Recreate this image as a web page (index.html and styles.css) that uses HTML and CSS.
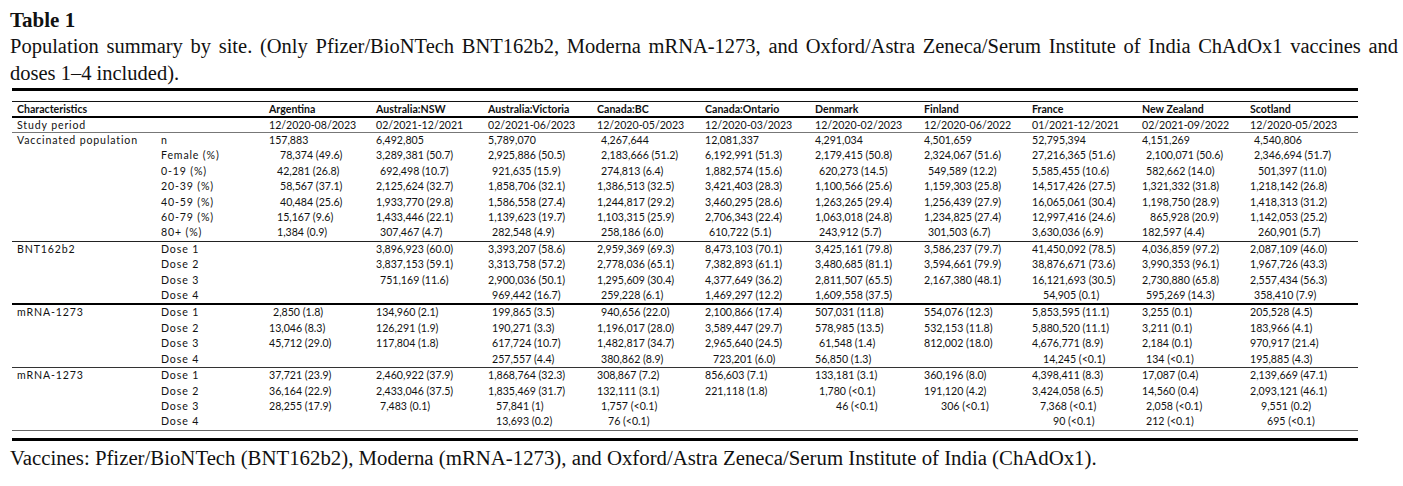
FILE: index.html
```html
<!DOCTYPE html>
<html lang="en">
<head>
<meta charset="utf-8">
<title>Table 1</title>
<link rel="stylesheet" href="styles.css">
</head>
<body>
<div class="title">Table 1</div>
<div class="caption"><span class="l1">Population summary by site. (Only Pfizer/BioNTech BNT162b2, Moderna mRNA-1273, and Oxford/Astra Zeneca/Serum Institute of India ChAdOx1 vaccines and</span><span class="l2">doses 1–4 included).</span></div>
<div class="figure">
<table class="data">
<colgroup>
<col class="c1"><col class="c2"><col class="c3"><col class="c4"><col class="c5"><col class="c6"><col class="c7"><col class="c8"><col class="c9"><col class="c10"><col class="c11"><col class="c12">
</colgroup>
<thead>
<tr class="head"><th>Characteristics</th><th></th><th>Argentina</th><th>Australia:NSW</th><th>Australia:Victoria</th><th>Canada:BC</th><th>Canada:Ontario</th><th>Denmark</th><th>Finland</th><th>France</th><th>New Zealand</th><th>Scotland</th></tr>
</thead>
<tbody class="period">
<tr><td class="lab">Study period</td><td></td><td>12/2020-08/2023</td><td>02/2021-12/2021</td><td>02/2021-06/2023</td><td>12/2020-05/2023</td><td>12/2020-03/2023</td><td>12/2020-02/2023</td><td>12/2020-06/2022</td><td>01/2021-12/2021</td><td>02/2021-09/2022</td><td>12/2020-05/2023</td></tr>
</tbody>
<tbody class="grp g-thin">
<tr><td class="lab">Vaccinated population</td><td class="lab">n</td><td>157,883</td><td>6,492,805</td><td>5,789,070</td><td class="s1">4,267,644</td><td>12,081,337</td><td>4,291,034</td><td>4,501,659</td><td>52,795,394</td><td>4,151,269</td><td class="s1">4,540,806</td></tr>
<tr><td></td><td class="lab">Female (%)</td><td class="s3">78,374 (49.6)</td><td>3,289,381 (50.7)</td><td>2,925,886 (50.5)</td><td class="s1">2,183,666 (51.2)</td><td>6,192,991 (51.3)</td><td>2,179,415 (50.8)</td><td>2,324,067 (51.6)</td><td>27,216,365 (51.6)</td><td class="s1">2,100,071 (50.6)</td><td class="s1">2,346,694 (51.7)</td></tr>
<tr><td></td><td class="lab">0-19 (%)</td><td class="s2">42,281 (26.8)</td><td class="s1">692,498 (10.7)</td><td class="s1">921,635 (15.9)</td><td class="s1">274,813 (6.4)</td><td>1,882,574 (15.6)</td><td class="s1">620,273 (14.5)</td><td class="s1">549,589 (12.2)</td><td>5,585,455 (10.6)</td><td class="s1">582,662 (14.0)</td><td class="s2">501,397 (11.0)</td></tr>
<tr><td></td><td class="lab">20-39 (%)</td><td class="s3">58,567 (37.1)</td><td>2,125,624 (32.7)</td><td>1,858,706 (32.1)</td><td>1,386,513 (32.5)</td><td>3,421,403 (28.3)</td><td>1,100,566 (25.6)</td><td>1,159,303 (25.8)</td><td>14,517,426 (27.5)</td><td>1,321,332 (31.8)</td><td>1,218,142 (26.8)</td></tr>
<tr><td></td><td class="lab">40-59 (%)</td><td class="s3">40,484 (25.6)</td><td>1,933,770 (29.8)</td><td>1,586,558 (27.4)</td><td>1,244,817 (29.2)</td><td>3,460,295 (28.6)</td><td>1,263,265 (29.4)</td><td>1,256,439 (27.9)</td><td>16,065,061 (30.4)</td><td>1,198,750 (28.9)</td><td>1,418,313 (31.2)</td></tr>
<tr><td></td><td class="lab">60-79 (%)</td><td class="s2">15,167 (9.6)</td><td>1,433,446 (22.1)</td><td>1,139,623 (19.7)</td><td>1,103,315 (25.9)</td><td>2,706,343 (22.4)</td><td>1,063,018 (24.8)</td><td>1,234,825 (27.4)</td><td>12,997,416 (24.6)</td><td class="s2">865,928 (20.9)</td><td>1,142,053 (25.2)</td></tr>
<tr class="last"><td></td><td class="lab">80+ (%)</td><td class="s2">1,384 (0.9)</td><td class="s1">307,467 (4.7)</td><td class="s1">282,548 (4.9)</td><td class="s1">258,186 (6.0)</td><td class="s1">610,722 (5.1)</td><td class="s1">243,912 (5.7)</td><td class="s1">301,503 (6.7)</td><td>3,630,036 (6.9)</td><td>182,597 (4.4)</td><td class="s2">260,901 (5.7)</td></tr>
</tbody>
<tbody class="grp g-thick">
<tr><td class="lab">BNT162b2</td><td class="lab">Dose 1</td><td></td><td>3,896,923 (60.0)</td><td>3,393,207 (58.6)</td><td>2,959,369 (69.3)</td><td>8,473,103 (70.1)</td><td>3,425,161 (79.8)</td><td>3,586,237 (79.7)</td><td>41,450,092 (78.5)</td><td>4,036,859 (97.2)</td><td>2,087,109 (46.0)</td></tr>
<tr><td></td><td class="lab">Dose 2</td><td></td><td>3,837,153 (59.1)</td><td>3,313,758 (57.2)</td><td>2,778,036 (65.1)</td><td>7,382,893 (61.1)</td><td>3,480,685 (81.1)</td><td>3,594,661 (79.9)</td><td>38,876,671 (73.6)</td><td>3,990,353 (96.1)</td><td>1,967,726 (43.3)</td></tr>
<tr><td></td><td class="lab">Dose 3</td><td></td><td class="s1">751,169 (11.6)</td><td>2,900,036 (50.1)</td><td>1,295,609 (30.4)</td><td>4,377,649 (36.2)</td><td>2,811,507 (65.5)</td><td>2,167,380 (48.1)</td><td>16,121,693 (30.5)</td><td>2,730,880 (65.8)</td><td>2,557,434 (56.3)</td></tr>
<tr class="last"><td></td><td class="lab">Dose 4</td><td></td><td></td><td class="s1">969,442 (16.7)</td><td class="s1">259,228 (6.1)</td><td>1,469,297 (12.2)</td><td>1,609,558 (37.5)</td><td></td><td class="s3">54,905 (0.1)</td><td class="s1">595,269 (14.3)</td><td class="s1">358,410 (7.9)</td></tr>
</tbody>
<tbody class="grp g-mid">
<tr><td class="lab">mRNA-1273</td><td class="lab">Dose 1</td><td class="s1">2,850 (1.8)</td><td>134,960 (2.1)</td><td class="s1">199,865 (3.5)</td><td class="s1">940,656 (22.0)</td><td>2,100,866 (17.4)</td><td>507,031 (11.8)</td><td>554,076 (12.3)</td><td>5,853,595 (11.1)</td><td>3,255 (0.1)</td><td>205,528 (4.5)</td></tr>
<tr><td></td><td class="lab">Dose 2</td><td>13,046 (8.3)</td><td>126,291 (1.9)</td><td class="s1">190,271 (3.3)</td><td>1,196,017 (28.0)</td><td>3,589,447 (29.7)</td><td>578,985 (13.5)</td><td>532,153 (11.8)</td><td>5,880,520 (11.1)</td><td>3,211 (0.1)</td><td>183,966 (4.1)</td></tr>
<tr><td></td><td class="lab">Dose 3</td><td>45,712 (29.0)</td><td>117,804 (1.8)</td><td class="s1">617,724 (10.7)</td><td>1,482,817 (34.7)</td><td>2,965,640 (24.5)</td><td class="s1">61,548 (1.4)</td><td>812,002 (18.0)</td><td>4,676,771 (8.9)</td><td>2,184 (0.1)</td><td>970,917 (21.4)</td></tr>
<tr class="last"><td></td><td class="lab">Dose 4</td><td></td><td></td><td class="s1">257,557 (4.4)</td><td class="s1">380,862 (8.9)</td><td class="s2">723,201 (6.0)</td><td>56,850 (1.3)</td><td></td><td class="s3">14,245 (&lt;0.1)</td><td class="s1">134 (&lt;0.1)</td><td>195,885 (4.3)</td></tr>
</tbody>
<tbody class="grp g-light">
<tr><td class="lab">mRNA-1273</td><td class="lab">Dose 1</td><td>37,721 (23.9)</td><td>2,460,922 (37.9)</td><td>1,868,764 (32.3)</td><td>308,867 (7.2)</td><td>856,603 (7.1)</td><td>133,181 (3.1)</td><td>360,196 (8.0)</td><td>4,398,411 (8.3)</td><td>17,087 (0.4)</td><td>2,139,669 (47.1)</td></tr>
<tr><td></td><td class="lab">Dose 2</td><td>36,164 (22.9)</td><td>2,433,046 (37.5)</td><td>1,835,469 (31.7)</td><td>132,111 (3.1)</td><td>221,118 (1.8)</td><td class="s1">1,780 (&lt;0.1)</td><td>191,120 (4.2)</td><td>3,424,058 (6.5)</td><td>14,560 (0.4)</td><td>2,093,121 (46.1)</td></tr>
<tr><td></td><td class="lab">Dose 3</td><td>28,255 (17.9)</td><td class="s1">7,483 (0.1)</td><td class="s2">57,841 (1)</td><td class="s1">1,757 (&lt;0.1)</td><td></td><td class="s5">46 (&lt;0.1)</td><td class="s4">306 (&lt;0.1)</td><td class="s2">7,368 (&lt;0.1)</td><td class="s1">2,058 (&lt;0.1)</td><td class="s3">9,551 (0.2)</td></tr>
<tr class="last"><td></td><td class="lab">Dose 4</td><td></td><td></td><td class="s2">13,693 (0.2)</td><td class="s3">76 (&lt;0.1)</td><td></td><td></td><td></td><td class="s5">90 (&lt;0.1)</td><td class="s1">212 (&lt;0.1)</td><td class="s4">695 (&lt;0.1)</td></tr>
</tbody>
</table>
<div class="endrule"></div>
</div>
<div class="footnote">Vaccines: Pfizer/BioNTech (BNT162b2), Moderna (mRNA-1273), and Oxford/Astra Zeneca/Serum Institute of India (ChAdOx1).</div>
</body>
</html>
```
FILE: styles.css
```css
html, body {
  background: #fff;
}
body {
  margin: 0;
  padding: 7px 0 0 10px;
  font-family: "Liberation Serif", "Times New Roman", serif;
  color: #111;
}
.title {
  font-weight: bold;
  font-size: 21px;
  line-height: 26px;
}
.caption {
  width: 1388px;
  font-size: 20.5px;
  line-height: 27px;
}
.caption .l1 {
  display: block;
  text-align: justify;
  text-align-last: justify;
}
.caption .l2 {
  display: block;
}
.figure {
  width: 1346px;
  margin: 1px 0 0 2px;
  border-top: 3px solid #000;
  padding-top: 10px;
}
.data {
  width: 1346px;
  table-layout: fixed;
  border-collapse: separate;
  border-spacing: 0;
  border-top: 1px solid #111;
  font-family: Lato, "Open Sans", sans-serif;
  font-size: 10.6px;
  color: #111;
}
.c1 { width: 144px; }
.c2 { width: 108px; }
.c3 { width: 107px; }
.c4 { width: 112px; }
.c5 { width: 109px; }
.c6 { width: 108px; }
.c7 { width: 110px; }
.c8 { width: 109px; }
.c9 { width: 108px; }
.c10 { width: 110px; }
.c11 { width: 108px; }
.c12 { width: 113px; }
.data th,
.data td {
  padding: 0 0 0 5px;
  text-align: left;
  white-space: nowrap;
  vertical-align: middle;
}
.data th {
  font-weight: bold;
  line-height: 14px;
  height: 14px;
  border-bottom: 2px solid #000;
}
.period td {
  line-height: 14px;
  height: 14px;
  border-bottom: 1px solid #777;
}
.grp td {
  line-height: 15.4px;
  height: 15.4px;
}
.lab {
  letter-spacing: 0.85px;
}
.g-thin .last td { border-bottom: 1px solid #222; }
.g-thick .last td { border-bottom: 2px solid #000; }
.g-mid .last td { border-bottom: 1px solid #333; }
.g-light .last td { border-bottom: 1px solid #666; }
.data td.s1 { padding-left: 9px; }
.data td.s2 { padding-left: 13px; }
.data td.s3 { padding-left: 16px; }
.data td.s4 { padding-left: 22px; }
.data td.s5 { padding-left: 26px; }
.endrule {
  height: 7px;
  border-bottom: 3px solid #000;
}
.footnote {
  margin-top: 5px;
  font-size: 20.8px;
  line-height: 24px;
}
```
